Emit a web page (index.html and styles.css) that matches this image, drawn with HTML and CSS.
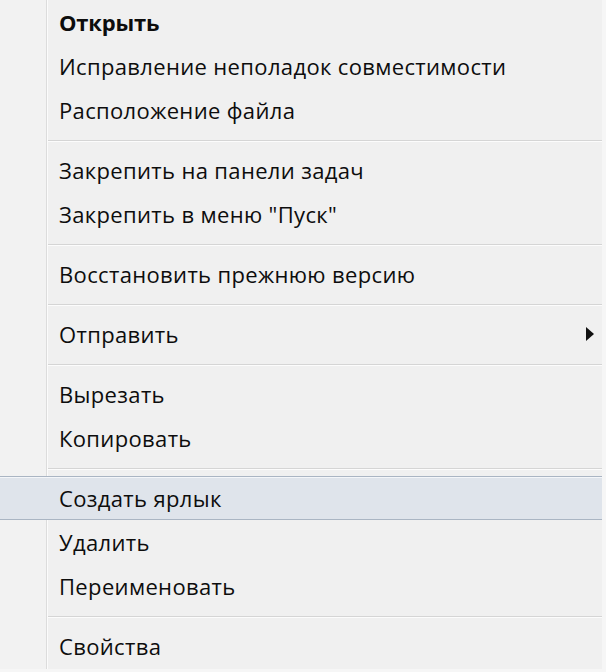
FILE: index.html
```html
<!DOCTYPE html>
<html lang="ru">
<head>
<meta charset="utf-8">
<link rel="stylesheet" href="styles.css">
</head>
<body>
<div class="menu">
  <div class="item bold"><span class="label">Открыть</span></div>
  <div class="item"><span class="label">Исправление неполадок совместимости</span></div>
  <div class="item"><span class="label">Расположение файла</span></div>
  <div class="sep"></div>
  <div class="item"><span class="label">Закрепить на панели задач</span></div>
  <div class="item"><span class="label">Закрепить в меню "Пуск"</span></div>
  <div class="sep"></div>
  <div class="item"><span class="label">Восстановить прежнюю версию</span></div>
  <div class="sep"></div>
  <div class="item"><span class="label">Отправить</span><span class="arrow"></span></div>
  <div class="sep"></div>
  <div class="item"><span class="label">Вырезать</span></div>
  <div class="item"><span class="label">Копировать</span></div>
  <div class="sep"></div>
  <div class="item hover"><span class="label">Создать ярлык</span></div>
  <div class="item"><span class="label">Удалить</span></div>
  <div class="item"><span class="label">Переименовать</span></div>
  <div class="sep"></div>
  <div class="item"><span class="label">Свойства</span></div>
</div>
</body>
</html>
```
FILE: styles.css
```css
html, body {
  margin: 0;
  padding: 0;
  background: #f6f6f6;
}
body {
  font-family: "Open Sans", "Noto Sans", sans-serif;
  font-size: 22px;
  letter-spacing: 0.35px;
  color: #0d0d0d;
}
.menu {
  width: 602px;
  height: 669px;
  background: #f0f0f0;
  display: flex;
  flex-direction: column;
  background-image: linear-gradient(to right, #f2f2f2 0, #f2f2f2 46px, #dcdcdc 46px, #dcdcdc 47px, #fbfbfb 47px, #fbfbfb 48px, transparent 48px);
}
.item {
  height: 44px;
  line-height: 42px;
  display: flex;
  align-items: center;
  padding-left: 59px;
  padding-right: 8px;
  white-space: nowrap;
  box-sizing: border-box;
}
.label {
  flex: 1;
}
.bold .label {
  font-weight: 700;
  letter-spacing: -0.2px;
}
.item.hover {
  background: #dfe4eb;
  border-top: 1px solid #aab5c3;
  border-bottom: 1px solid #aab5c3;
  box-shadow: inset 0 1px 0 #f4f6f9;
  line-height: 40px;
}
.arrow {
  width: 0;
  height: 0;
  border-top: 7px solid transparent;
  border-bottom: 7px solid transparent;
  border-left: 8px solid #111;
}
.sep {
  height: 16px;
  margin-left: 48px;
  background: linear-gradient(to bottom, transparent 0, transparent 8px, #d5d5d5 8px, #d5d5d5 9px, #fcfcfc 9px, #fcfcfc 10px, transparent 10px);
}
```
